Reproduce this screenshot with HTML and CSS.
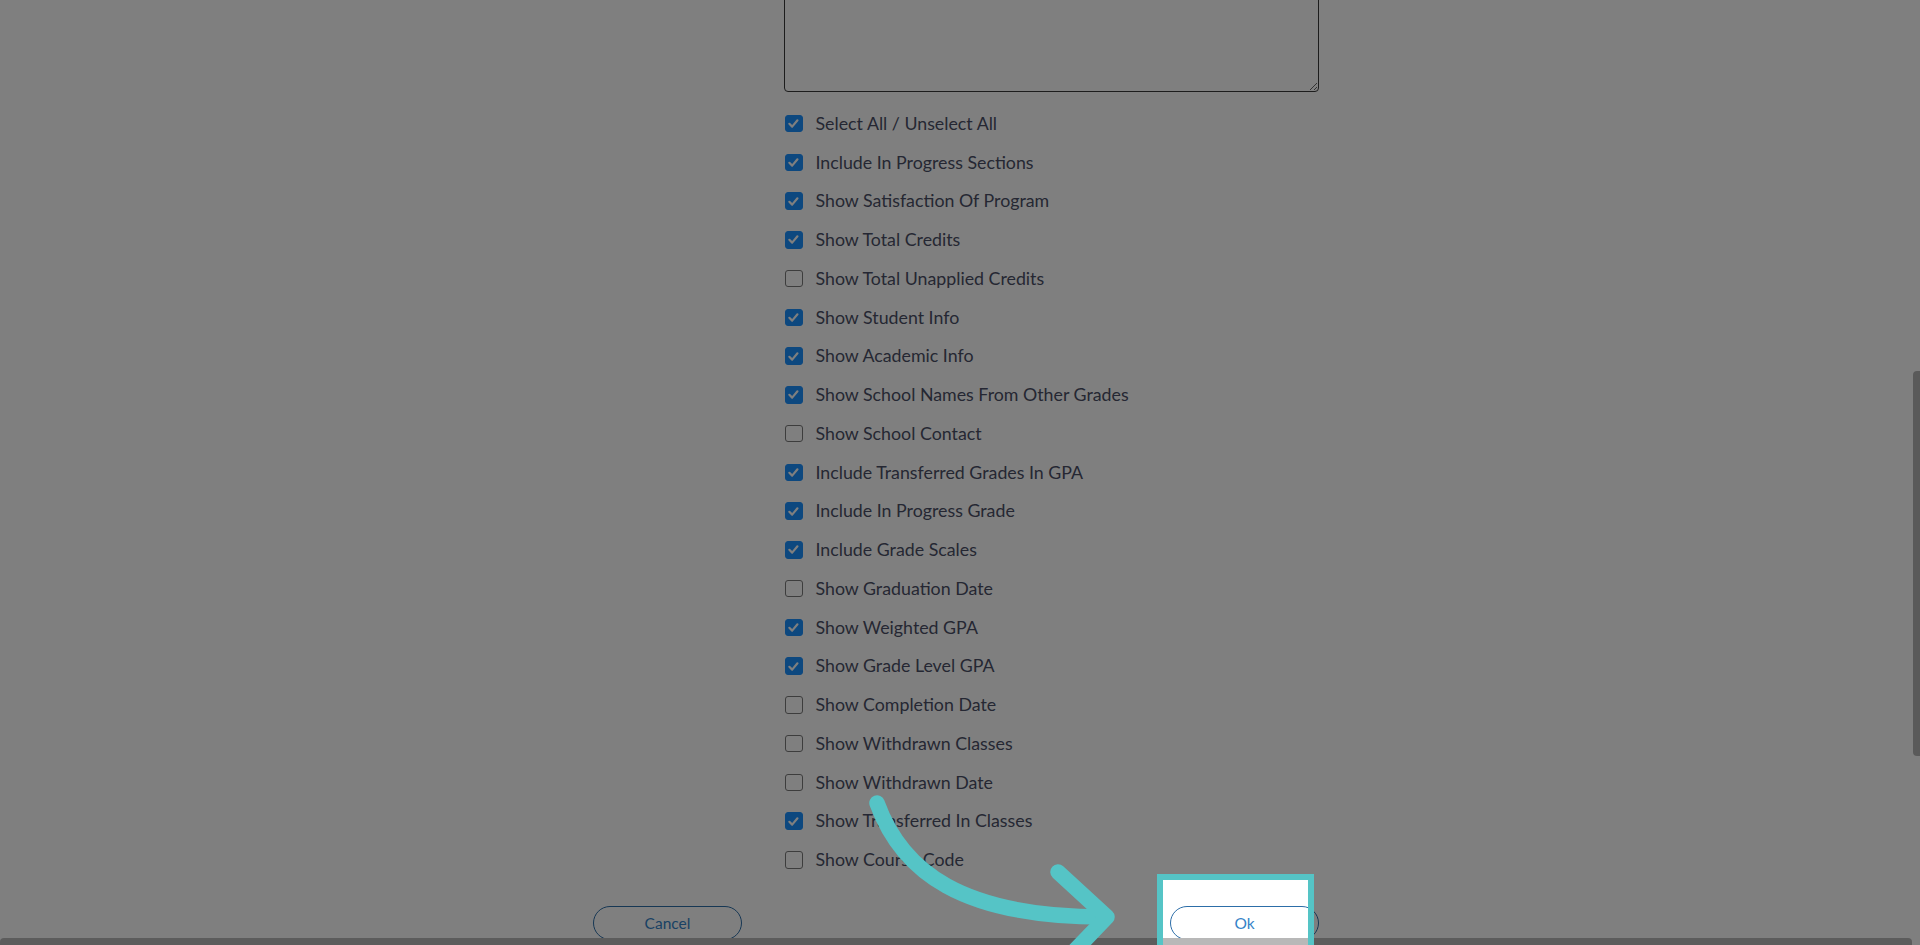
FILE: index.html
```html
<!DOCTYPE html>
<html lang="en">
<head>
<meta charset="utf-8">
<title>Transcript options</title>
<link rel="stylesheet" href="styles.css">
</head>
<body>
<div class="page">
  <div class="dialog">
    <div class="fields">
      <textarea class="notes"></textarea>
      <div class="options">
        <label class="option"><span class="box on"><svg viewBox="0 0 18 18"><path d="M4.6 9.3 L7.6 12.3 L13.2 5.6"/></svg></span><span class="text">Select All / Unselect All</span></label>
        <label class="option"><span class="box on"><svg viewBox="0 0 18 18"><path d="M4.6 9.3 L7.6 12.3 L13.2 5.6"/></svg></span><span class="text">Include In Progress Sections</span></label>
        <label class="option"><span class="box on"><svg viewBox="0 0 18 18"><path d="M4.6 9.3 L7.6 12.3 L13.2 5.6"/></svg></span><span class="text">Show Satisfaction Of Program</span></label>
        <label class="option"><span class="box on"><svg viewBox="0 0 18 18"><path d="M4.6 9.3 L7.6 12.3 L13.2 5.6"/></svg></span><span class="text">Show Total Credits</span></label>
        <label class="option"><span class="box"></span><span class="text">Show Total Unapplied Credits</span></label>
        <label class="option"><span class="box on"><svg viewBox="0 0 18 18"><path d="M4.6 9.3 L7.6 12.3 L13.2 5.6"/></svg></span><span class="text">Show Student Info</span></label>
        <label class="option"><span class="box on"><svg viewBox="0 0 18 18"><path d="M4.6 9.3 L7.6 12.3 L13.2 5.6"/></svg></span><span class="text">Show Academic Info</span></label>
        <label class="option"><span class="box on"><svg viewBox="0 0 18 18"><path d="M4.6 9.3 L7.6 12.3 L13.2 5.6"/></svg></span><span class="text">Show School Names From Other Grades</span></label>
        <label class="option"><span class="box"></span><span class="text">Show School Contact</span></label>
        <label class="option"><span class="box on"><svg viewBox="0 0 18 18"><path d="M4.6 9.3 L7.6 12.3 L13.2 5.6"/></svg></span><span class="text">Include Transferred Grades In GPA</span></label>
        <label class="option"><span class="box on"><svg viewBox="0 0 18 18"><path d="M4.6 9.3 L7.6 12.3 L13.2 5.6"/></svg></span><span class="text">Include In Progress Grade</span></label>
        <label class="option"><span class="box on"><svg viewBox="0 0 18 18"><path d="M4.6 9.3 L7.6 12.3 L13.2 5.6"/></svg></span><span class="text">Include Grade Scales</span></label>
        <label class="option"><span class="box"></span><span class="text">Show Graduation Date</span></label>
        <label class="option"><span class="box on"><svg viewBox="0 0 18 18"><path d="M4.6 9.3 L7.6 12.3 L13.2 5.6"/></svg></span><span class="text">Show Weighted GPA</span></label>
        <label class="option"><span class="box on"><svg viewBox="0 0 18 18"><path d="M4.6 9.3 L7.6 12.3 L13.2 5.6"/></svg></span><span class="text">Show Grade Level GPA</span></label>
        <label class="option"><span class="box"></span><span class="text">Show Completion Date</span></label>
        <label class="option"><span class="box"></span><span class="text">Show Withdrawn Classes</span></label>
        <label class="option"><span class="box"></span><span class="text">Show Withdrawn Date</span></label>
        <label class="option"><span class="box on"><svg viewBox="0 0 18 18"><path d="M4.6 9.3 L7.6 12.3 L13.2 5.6"/></svg></span><span class="text">Show Transferred In Classes</span></label>
        <label class="option"><span class="box"></span><span class="text">Show Course Code</span></label>
      </div>
    </div>
    <div class="actions">
      <button class="btn">Cancel</button>
      <button class="btn">Ok</button>
    </div>
  </div>
</div>
<div class="scroll-v"></div>
<div class="scroll-h"></div>
<div class="spotlight"></div>
<svg class="arrow" viewBox="0 0 1920 945" width="1920" height="945">
  <path d="M877 803 C 902 872, 962 917, 1104 917"/>
  <path d="M1058 872 L1107 917 L1058 968"/>
</svg>
</body>
</html>
```

FILE: styles.css
```css
html, body {
  margin: 0;
  padding: 0;
  width: 1920px;
  height: 945px;
  overflow: hidden;
  background: #ffffff;
  font-family: Lato, "Open Sans", "Liberation Sans", sans-serif;
  color: #4b4f66;
}

.page {
  width: 1912px;
  position: relative;
}

.dialog {
  width: 726px;
  margin: 0 auto;
}

.fields {
  margin-left: 191px;
  margin-top: -38px;
}

.notes {
  display: block;
  box-sizing: border-box;
  width: 535px;
  height: 130px;
  border: 1px solid #3a3a3a;
  border-radius: 4px;
  background: #ffffff;
  margin: 0;
}

.options {
  margin-top: 12.3px;
  display: flex;
  flex-direction: column;
}

.option {
  display: flex;
  align-items: center;
  height: 38.75px;
  gap: 13px;
  padding-left: 1px;
}

.box {
  box-sizing: border-box;
  width: 17.5px;
  height: 17.5px;
  border: 1.5px solid #7a7a7a;
  border-radius: 3px;
  background: #ffffff;
  flex: none;
  display: flex;
  align-items: center;
  justify-content: center;
}

.box.on {
  background: #1a90ff;
  border-color: #1a90ff;
}

.box svg {
  width: 17px;
  height: 17px;
  flex: none;
}

.box svg path {
  fill: none;
  stroke: #ffffff;
  stroke-width: 2.3;
  stroke-linecap: round;
  stroke-linejoin: round;
}

.text {
  font-size: 17.8px;
  line-height: 1;
  color: #4b4f66;
  white-space: nowrap;
}

.actions {
  margin-top: 26.7px;
  display: flex;
  justify-content: space-between;
}

.btn {
  box-sizing: border-box;
  width: 149px;
  height: 34px;
  border: 1.3px solid #2d6ea8;
  border-radius: 17px;
  background: #ffffff;
  color: #3583c8;
  font-family: Lato, "Open Sans", "Liberation Sans", sans-serif;
  font-size: 15.5px;
  padding: 0;
}

.scroll-v {
  position: absolute;
  right: 0;
  top: 371px;
  width: 7px;
  height: 385px;
  background: #b5b5b5;
  border-radius: 4px 0 0 4px;
}

.scroll-h {
  position: absolute;
  left: 0;
  bottom: 0;
  width: 1912px;
  height: 7px;
  background: #b8b8b8;
  border-radius: 4px 4px 0 0;
}

.spotlight {
  position: absolute;
  left: 1157px;
  top: 874px;
  width: 145px;
  height: 100px;
  border: 6px solid #55c4c6;
  box-shadow: 0 0 0 3000px rgba(0, 0, 0, 0.5);
}

.arrow {
  position: absolute;
  left: 0;
  top: 0;
  pointer-events: none;
}

.arrow path {
  fill: none;
  stroke: #55c4c6;
  stroke-width: 15.5;
  stroke-linecap: round;
  stroke-linejoin: round;
}
```
